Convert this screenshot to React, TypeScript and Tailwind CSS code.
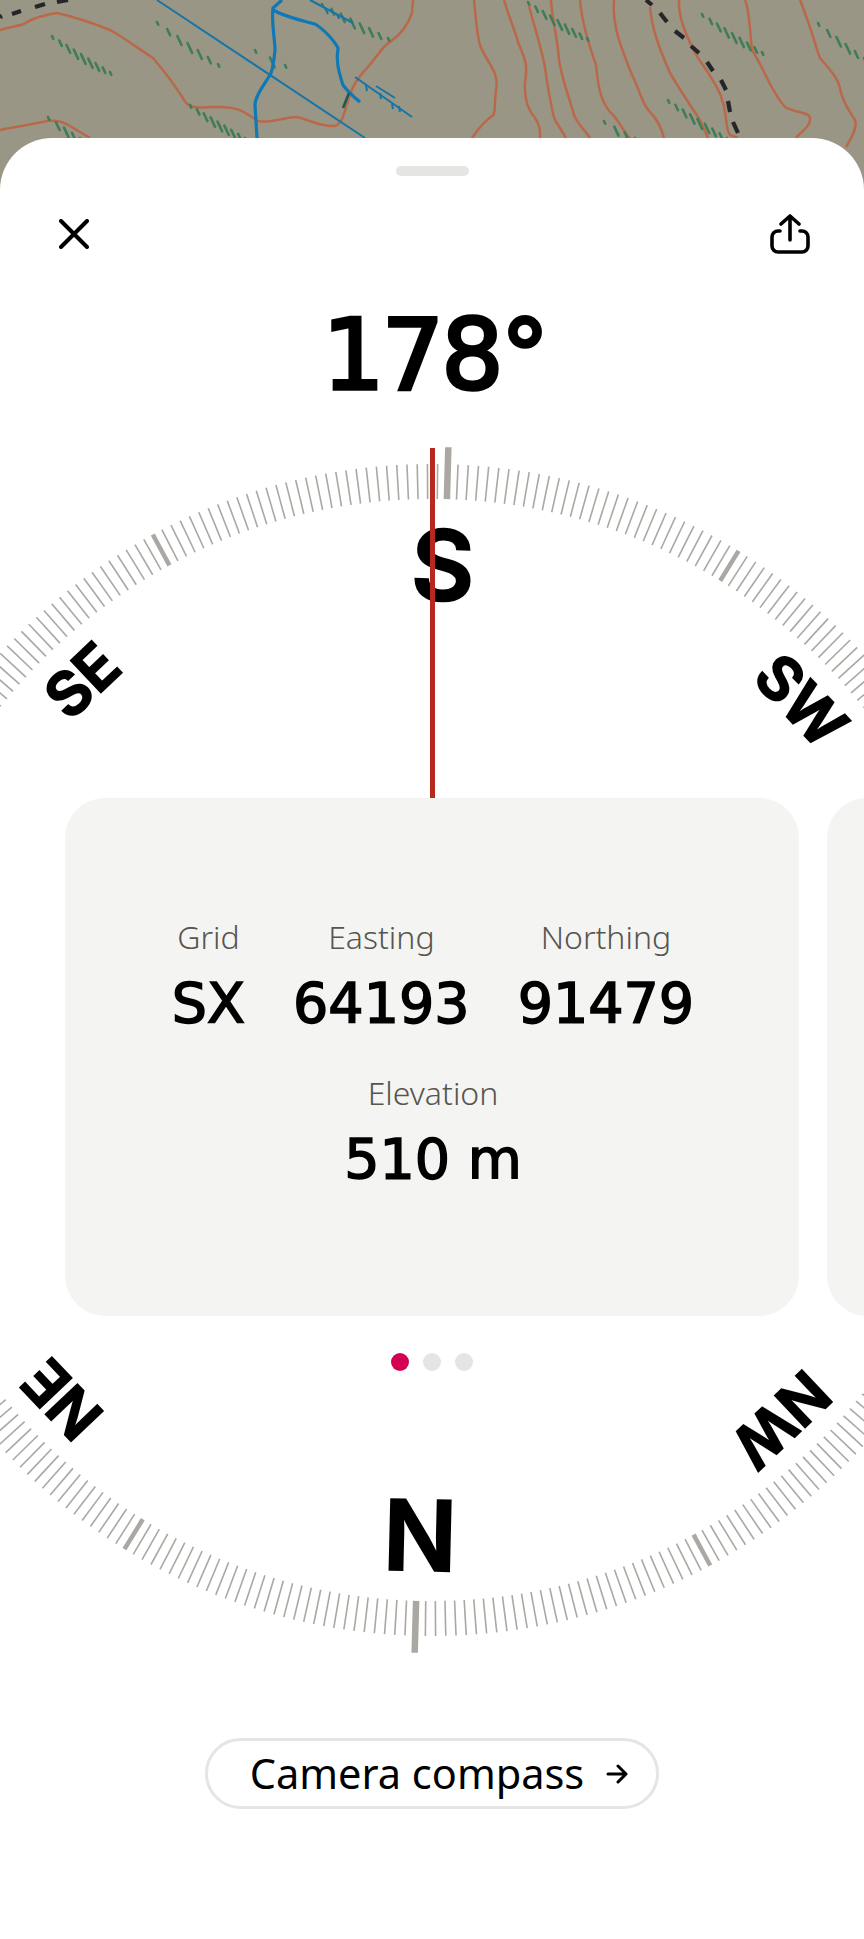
import React from 'react';

const num = "font-['DejaVu_Sans'] text-black";
const label = "font-['Noto_Sans'] font-light text-[32px] leading-[40px] text-[#57554f]";

// rotation of the dial so that S sits just right of the needle
const DIAL_ROTATION = 181.6;
const CX = 431.5;
const CY = 1050;

function MapBackdrop() {
  const orange = [
    "M0 30 C10 27 18 26 24 24 C30 20 35 17 57 13 C75 17 95 24 110 30 C125 38 140 50 153 58 C165 72 175 85 186 103 C192 108 197 108 215 107 C240 106 245 113 258 121 C270 124 285 117 297 117 C310 120 320 127 335 126 C345 122 344 108 353 87 C358 78 360 75 367 68 C375 60 383 45 390 42 C400 35 408 25 412 13 L413 0",
    "M0 130 C20 126 35 124 47 121 C55 120 62 121 70 126 L90 138",
    "M474 0 C476 20 477 35 480 45 C485 60 500 72 496 90 C494 105 496 115 492 116 C480 125 478 130 472 138",
    "M504 0 C510 20 514 28 518 42 C525 60 528 62 525 83 C524 100 528 110 535 118 C540 125 540 130 540 138",
    "M529 6 C535 30 544 55 546 75 C550 100 553 115 555 120 L566 138",
    "M551 0 C552 20 558 40 559 60 C562 80 570 100 574 115 C578 125 585 130 590 138",
    "M580 0 C582 25 590 48 596 65 C598 85 600 100 610 112 C618 118 625 135 630 138",
    "M614 0 C612 25 620 45 632 75 C640 90 642 105 650 112 C658 120 662 130 664 138",
    "M650 7 C652 30 660 50 670 73 C680 90 690 105 700 120 L708 138",
    "M679 0 C678 15 685 35 698 58 C710 75 720 90 722 100 C727 110 725 130 730 135 L738 138",
    "M745 0 C750 12 750 35 752 50 C765 70 770 90 785 107 C795 113 810 112 810 118 C811 127 800 132 796 138",
    "M800 0 C812 30 815 45 820 58 C830 70 838 78 840 88 C842 102 850 112 855 120 C858 128 850 140 846 147",
  ];
  const blue = [
    "M282 0 L273 8 C271 20 275 40 275 50 C274 60 272 72 270 75 C262 88 255 97 255 105 L257 138",
    "M273 10 C285 17 300 20 315 24 C325 30 335 42 338 48 C336 60 338 70 343 85 C348 92 355 98 360 102",
  ];
  const thinBlue = [
    "M157 0 L365 138",
    "M310 0 L353 23",
    "M325 8 L328 14", "M337 14 L339 19",
    "M355 77 L412 117",
    "M376 86 L395 98",
    "M366 85 L367 91", "M380 93 L381 99", "M392 104 L393 109", "M399 106 L400 112",
  ];
  const dashes = [
    [0, 17, 2, 16], [12, 14, 21, 11], [35, 7, 45, 4], [57, 2, 68, 0],
    [646, 0, 652, 5], [660, 13, 667, 22], [675, 31, 684, 38], [691, 46, 699, 53], [707, 62, 713, 71], [721, 80, 726, 90], [728, 101, 730, 112], [733, 122, 738, 133],
  ];
  const hatches: [number, number, number, number, number][] = [
    [52, 36, 110, 72, 9],
    [157, 22, 218, 64, 7],
    [190, 105, 245, 138, 9],
    [48, 117, 80, 138, 5],
    [322, 4, 388, 38, 8],
    [255, 50, 285, 65, 3],
    [528, 2, 587, 38, 9],
    [702, 14, 762, 52, 9],
    [818, 23, 864, 58, 6],
    [668, 100, 727, 138, 9],
    [604, 121, 635, 138, 4],
  ];

  return (
    <svg viewBox="0 0 864 200" className="block w-full h-[200px] bg-[#999686]">
      <g className="blur-[0.5px]">
        {orange.map((d, i) => (
          <path key={i} d={d} fill="none" stroke="#b9694a" strokeWidth="2.5" />
        ))}
        {hatches.map(([x1, y1, x2, y2, n], i) =>
          Array.from({ length: n }, (_, k) => {
            const t = k / (n - 1);
            const x = x1 + (x2 - x1) * t;
            const y = y1 + (y2 - y1) * t;
            const len = 3 + 8 * Math.sin(Math.PI * t);
            return (
              <line key={`${i}-${k}`} x1={x} y1={y} x2={x + len * 0.42} y2={y + len * 0.9}
                stroke="#3f7d58" strokeWidth="2.6" strokeLinecap="round" />
            );
          })
        )}
        {thinBlue.map((d, i) => (
          <path key={i} d={d} fill="none" stroke="#1675a6" strokeWidth="2" />
        ))}
        {blue.map((d, i) => (
          <path key={i} d={d} fill="none" stroke="#0f79b5" strokeWidth="3.2" />
        ))}
        <path d="M349 93 L343 108" stroke="#1d5a50" strokeWidth="2.6" />
        {dashes.map(([a, b, c, d], i) => (
          <line key={i} x1={a} y1={b} x2={c} y2={d} stroke="#26262a" strokeWidth="4.2" />
        ))}
      </g>
    </svg>
  );
}

function Dial() {
  const ticks = Array.from({ length: 360 }, (_, deg) => deg);
  const big = [
    { text: 'N', deg: 0 },
    { text: 'S', deg: 180 },
  ];
  const small = [
    { text: 'NE', deg: 45 },
    { text: 'SE', deg: 135 },
    { text: 'SW', deg: 225 },
    { text: 'NW', deg: 315 },
  ];

  return (
    <svg className="absolute left-0 top-0 pointer-events-none" width="864" height="1939" viewBox="0 0 864 1939">
      <g transform={`translate(${CX} ${CY}) rotate(${DIAL_ROTATION})`}>
        {ticks.map((deg) => {
          const cardinal = deg % 90 === 0;
          const major = deg % 30 === 0;
          return (
            <line
              key={deg}
              transform={`rotate(${deg})`}
              x1="0"
              x2="0"
              y1="-551"
              y2={cardinal ? -603 : -586}
              stroke="#aba8a3"
              strokeWidth={cardinal ? 6.5 : major ? 4.5 : 1.6}
            />
          );
        })}
        {big.map((l) => (
          <text
            key={l.text}
            transform={`rotate(${l.deg - 0.25}) translate(0 -485)`}
            y="35"
            textAnchor="middle"
            className="font-['Inter'] font-semibold text-[97px]"
            fill="#000"
            stroke="#000"
            strokeWidth="2"
          >
            {l.text}
          </text>
        ))}
        {small.map((l) => (
          <text
            key={l.text}
            transform={`rotate(${l.deg}) translate(0 -509)`}
            y="22"
            textAnchor="middle"
            className="font-['Inter'] font-semibold text-[60px]"
            fill="#000"
            stroke="#000"
            strokeWidth="2"
          >
            {l.text}
          </text>
        ))}
      </g>
    </svg>
  );
}

function Stat({ title, value }: { title: string; value: string }) {
  return (
    <div className="flex flex-col items-center">
      <span className={label}>{title}</span>
      <span className={`${num} mt-[12px] text-[55.5px] leading-[68px] [-webkit-text-stroke:1.6px_#000]`}>{value}</span>
    </div>
  );
}

export default function App() {
  return (
    <div className="relative w-[864px] h-[1939px] overflow-hidden bg-white">
      <MapBackdrop />
      <div className="relative -mt-[62px] h-[1801px] rounded-t-[52px] bg-white">
        <div className="absolute left-0 -top-[138px]">
          <Dial />
        </div>

        <div className="relative flex flex-col h-full">
          <div className="mx-auto mt-7 h-[10px] w-[73px] rounded-full bg-[#e5e5e3]" />

          <div className="mt-[38px] flex items-center justify-between pl-[59px] pr-[54px]">
            <svg width="30" height="30" viewBox="0 0 30 30" fill="none" stroke="#000" strokeWidth="4" strokeLinecap="round">
              <path d="M2 2 L28 28 M28 2 L2 28" />
            </svg>
            <svg width="40" height="40" viewBox="0 0 40 40" fill="none" stroke="#000" strokeWidth="3.6" strokeLinecap="round" strokeLinejoin="round">
              <path d="M10 17 H8 A6 6 0 0 0 2 23 V32 A6 6 0 0 0 8 38 H32 A6 6 0 0 0 38 32 V23 A6 6 0 0 0 32 17 H30" />
              <path d="M20 26 V3 M11 10 L20 2 L29 10" />
            </svg>
          </div>

          <h1 className={`${num} mt-[46px] pl-[5px] text-center text-[98px] leading-[110px] tracking-[-0.03em] [-webkit-text-stroke:3.5px_#000]`}>178°</h1>

          {/* needle */}
          <div className="relative mx-auto mt-[38px] h-[350px] w-[5px] bg-[#b8281f]" />

          <div className="flex gap-[28px] overflow-hidden pl-[65px]">
            <div className="flex h-[518px] w-[734px] shrink-0 flex-col items-center justify-center gap-[36px] rounded-[40px] bg-[#f4f4f2] pb-[4px] pl-[2px]">
              <div className="flex gap-[48px]">
                <Stat title="Grid" value="SX" />
                <Stat title="Easting" value="64193" />
                <Stat title="Northing" value="91479" />
              </div>
              <Stat title="Elevation" value="510 m" />
            </div>
            <div className="h-[518px] w-[734px] shrink-0 rounded-[40px] bg-[#f4f4f2]" />
          </div>

          <div className="mt-[37px] flex justify-center gap-[14px]">
            <span className="size-[18px] rounded-full bg-[#d30052]" />
            <span className="size-[18px] rounded-full bg-[#e5e5e3]" />
            <span className="size-[18px] rounded-full bg-[#e5e5e3]" />
          </div>

          <button className="mx-auto mt-[367px] flex h-[71px] w-[454px] items-center justify-center gap-[22px] rounded-full border-[3px] border-[#e5e5e3] bg-white pl-[14px]">
            <span className="font-['Noto_Sans'] text-[41.5px] leading-none text-black">Camera compass</span>
            <svg width="22" height="22" viewBox="0 0 22 22" fill="none" stroke="#000" strokeWidth="3" strokeLinecap="round" strokeLinejoin="round">
              <path d="M2 11 H19 M12 3 L20 11 L12 19" />
            </svg>
          </button>
        </div>
      </div>
    </div>
  );
}
